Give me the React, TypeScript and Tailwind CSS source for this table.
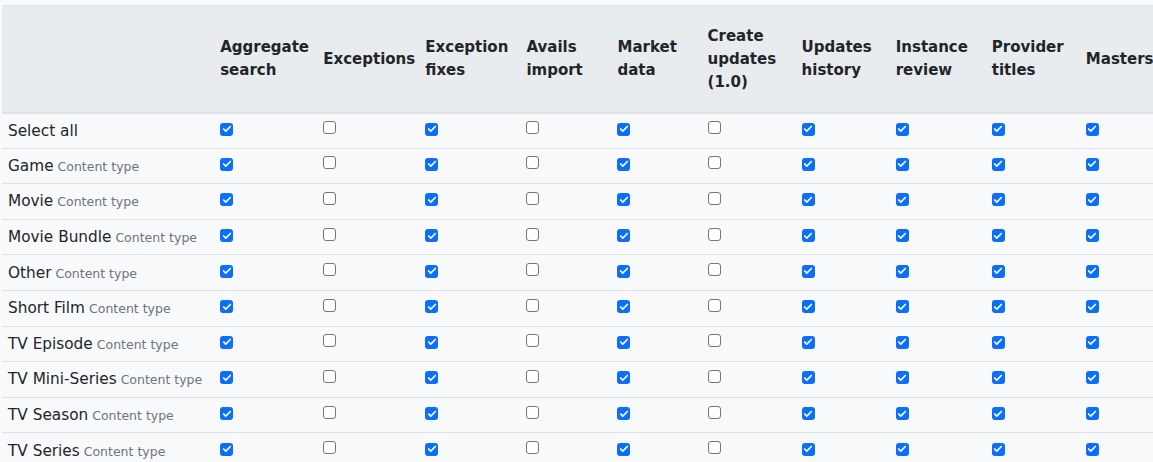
import { Check } from "lucide-react";

const columns = [
  { label: "Aggregate search", width: "w-[103px]", on: true },
  { label: "Exceptions", width: "w-[102px]", on: false },
  { label: "Exception fixes", width: "w-[101px]", on: true },
  { label: "Avails import", width: "w-[91px]", on: false },
  { label: "Market data", width: "w-[90px]", on: true },
  { label: "Create updates (1.0)", width: "w-[94px]", on: false },
  { label: "Updates history", width: "w-[94px]", on: true },
  { label: "Instance review", width: "w-[96px]", on: true },
  { label: "Provider titles", width: "w-[94px]", on: true },
  { label: "Masters", width: "w-[90px]", on: true },
];

const rows = [
  "Game",
  "Movie",
  "Movie Bundle",
  "Other",
  "Short Film",
  "TV Episode",
  "TV Mini-Series",
  "TV Season",
  "TV Series",
];

function Box({ checked }: { checked: boolean }) {
  if (checked) {
    return (
      <span className="inline-flex h-[13px] w-[13px] items-center justify-center rounded-[3px] bg-[#0b6ff9]">
        <Check className="h-[10px] w-[10px] text-white" strokeWidth={4} />
      </span>
    );
  }
  return (
    <span className="inline-block h-[13px] w-[13px] rounded-[3px] border border-[#767676] bg-white" />
  );
}

function BodyRow({ label, sub }: { label: string; sub?: boolean }) {
  return (
    <tr className="h-[35.6px] border-b border-[#dee2e6]">
      <td className="px-[6px] align-middle whitespace-nowrap">
        <span className="text-[15.3px] text-[#212529]">{label}</span>
        {sub && <span className="ml-[4px] text-[12.5px] text-[#6c757d]">Content type</span>}
      </td>
      {columns.map((c) => (
        <td key={c.label} className="px-2 pb-[3px] align-middle leading-none">
          <Box checked={c.on} />
        </td>
      ))}
    </tr>
  );
}

export default function App() {
  return (
    <div
      className="h-[462px] w-[1153px] overflow-hidden bg-[#f8f9fa] pl-[2px] pt-[5px]"
      style={{ fontFamily: '"DejaVu Sans", sans-serif' }}
    >
      <table className="w-[1166px] table-fixed border-collapse border-t border-[#dee2e6]">
        <colgroup>
          <col className="w-[210px]" />
          {columns.map((c) => (
            <col key={c.label} className={c.width} />
          ))}
        </colgroup>
        <thead>
          <tr className="h-[107px] border-b-2 border-[#dee2e6] bg-[#e9ecef]">
            <th />
            {columns.map((c) => (
              <th
                key={c.label}
                className="px-2 pt-[1px] text-left align-middle text-[15px] leading-[23px] font-bold text-[#212529]"
              >
                {c.label}
              </th>
            ))}
          </tr>
        </thead>
        <tbody>
          <BodyRow label="Select all" />
          {rows.map((r) => (
            <BodyRow key={r} label={r} sub />
          ))}
        </tbody>
      </table>
    </div>
  );
}
